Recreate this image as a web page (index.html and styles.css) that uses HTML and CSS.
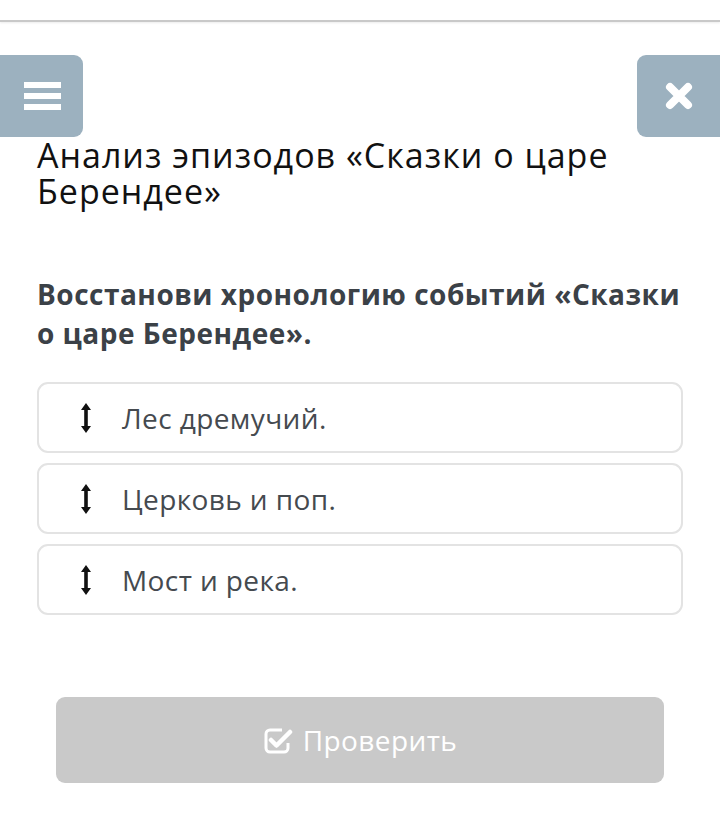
FILE: index.html
```html
<!DOCTYPE html>
<html lang="ru">
<head>
    <meta charset="UTF-8">
    <meta name="viewport" content="width=device-width, initial-scale=1.0">
    <title>Анализ эпизодов</title>
    <link rel="stylesheet" href="styles.css">
</head>
<body>
    <div class="topbar"></div>

    <div class="toolbar">
        <button class="tool-btn menu-btn" aria-label="Меню">
            <span class="bar"></span>
            <span class="bar"></span>
            <span class="bar"></span>
        </button>
        <button class="tool-btn close-btn" aria-label="Закрыть">
            <svg width="28" height="28" viewBox="0 0 28 28">
                <path d="M5 5 L23 23 M23 5 L5 23" stroke="#fff" stroke-width="8" stroke-linecap="round"/>
            </svg>
        </button>
    </div>

    <main class="content">
        <h1 class="lesson-title">Анализ эпизодов «Сказки о царе Берендее»</h1>
        <h2 class="task-text">Восстанови хронологию событий «Сказки о царе Берендее».</h2>

        <ul class="sort-list">
            <li class="sort-item">
                <svg class="drag-icon" width="10" height="30" viewBox="0 0 10 30"><path d="M5 0 L10 7 H6.8 V23 H10 L5 30 L0 23 H3.2 V7 H0 Z"/></svg>
                <span>Лес дремучий.</span>
            </li>
            <li class="sort-item">
                <svg class="drag-icon" width="10" height="30" viewBox="0 0 10 30"><path d="M5 0 L10 7 H6.8 V23 H10 L5 30 L0 23 H3.2 V7 H0 Z"/></svg>
                <span>Церковь и поп.</span>
            </li>
            <li class="sort-item">
                <svg class="drag-icon" width="10" height="30" viewBox="0 0 10 30"><path d="M5 0 L10 7 H6.8 V23 H10 L5 30 L0 23 H3.2 V7 H0 Z"/></svg>
                <span>Мост и река.</span>
            </li>
        </ul>

        <button class="check-btn" disabled>
            <svg width="30" height="28" viewBox="0 0 30 28">
                <path d="M19 4 H7 A4 4 0 0 0 3 8 V22 A4 4 0 0 0 7 26 H21 A4 4 0 0 0 25 22 V17" fill="none" stroke="#fff" stroke-width="3"/>
                <path d="M8 14 L13.5 19.5 L27 6" fill="none" stroke="#fff" stroke-width="4.5" stroke-linecap="round" stroke-linejoin="round"/>
            </svg>
            Проверить
        </button>
    </main>
</body>
</html>
```

FILE: styles.css
```css
* {
    margin: 0;
    padding: 0;
    box-sizing: border-box;
}

body {
    font-family: "Open Sans", "Noto Sans", sans-serif;
    background-color: #ffffff;
    color: #111;
}

.topbar {
    height: 22px;
    border-bottom: 2px solid #c9c9c9;
    box-shadow: 0 1px 2px rgba(0, 0, 0, 0.08);
}

.toolbar {
    display: flex;
    justify-content: space-between;
    margin-top: 33px;
}

.tool-btn {
    width: 83px;
    height: 82px;
    border: none;
    background-color: #9cb1bf;
    display: flex;
    align-items: center;
    justify-content: center;
}

.menu-btn {
    border-radius: 0 9px 9px 0;
    flex-direction: column;
    gap: 5px;
    padding-left: 2px;
}

.menu-btn .bar {
    display: block;
    width: 37px;
    height: 6px;
    background-color: #fff;
}

.close-btn {
    border-radius: 9px 0 0 9px;
    padding-left: 0;
}

.content {
    padding: 0 37px;
}

.lesson-title {
    font-size: 34px;
    font-weight: 400;
    line-height: 36px;
    letter-spacing: 1px;
    color: #111;
}

.task-text {
    margin-top: 66px;
    font-size: 28px;
    font-weight: 700;
    line-height: 39px;
    letter-spacing: 0.5px;
    color: #3b4147;
}

.sort-list {
    list-style: none;
    margin-top: 29px;
    display: flex;
    flex-direction: column;
    gap: 10px;
}

.sort-item {
    height: 71px;
    border: 2px solid #e3e3e3;
    border-radius: 11px;
    display: flex;
    align-items: center;
    padding-left: 42px;
    gap: 31px;
    font-size: 28px;
    letter-spacing: 0.4px;
    color: #454a4f;
}

.drag-icon {
    fill: #111;
    flex-shrink: 0;
}

.check-btn {
    display: flex;
    align-items: center;
    justify-content: center;
    gap: 10px;
    width: 608px;
    height: 86px;
    margin: 82px auto 0;
    border: none;
    border-radius: 9px;
    background-color: #c9c9c9;
    color: #ffffff;
    font-family: "Open Sans", "Noto Sans", sans-serif;
    font-size: 28px;
    letter-spacing: 0.4px;
}
```
